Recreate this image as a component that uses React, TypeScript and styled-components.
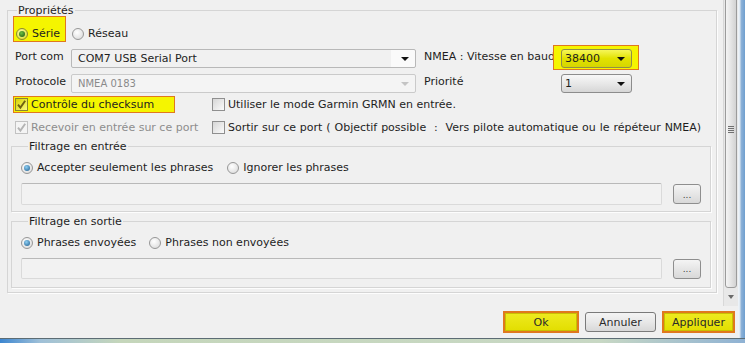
import React from 'react';
import styled, { createGlobalStyle, css } from 'styled-components';

const GlobalStyle = createGlobalStyle`
  html, body {
    margin: 0;
    padding: 0;
    background: #f0f0f0;
  }
  body {
    font-family: "DejaVu Sans", Verdana, sans-serif;
    font-size: 11px;
    line-height: 13px;
    color: #1e1e1e;
  }
`;

type ComboKind = 'flat' | 'disabled' | 'yellow' | 'gray';

function CheckMark({ color }: { color: string }) {
  return (
    <svg width="11" height="11" viewBox="0 0 11 11">
      <path d="M2 5.6 L4.4 8.6 L9.2 1.8" fill="none" stroke={color} strokeWidth="1.9" />
    </svg>
  );
}

function Radio({ checked, hl, children }: { checked?: boolean; hl?: boolean; children: React.ReactNode }) {
  return (
    <S.RadioLabel>
      <S.RadioDot $checked={checked} $hl={hl} />
      {children}
    </S.RadioLabel>
  );
}

function Check({ checked, disabled, hl, children }: { checked?: boolean; disabled?: boolean; hl?: boolean; children: React.ReactNode }) {
  return (
    <S.CheckLabel $disabled={disabled}>
      <S.CheckBox $hl={hl} $disabled={disabled}>
        {checked && <CheckMark color={disabled ? '#b4b4b4' : hl ? '#6e6210' : '#2a3d52'} />}
      </S.CheckBox>
      {children}
    </S.CheckLabel>
  );
}

function Combo({ kind, width, value }: { kind: ComboKind; width: number; value: string }) {
  return (
    <S.Combo $kind={kind} style={{ width }}>
      <S.ComboText $kind={kind}>{value}</S.ComboText>
      <S.ComboArrow $kind={kind} />
    </S.Combo>
  );
}

export default function App() {
  return (
    <>
      <GlobalStyle />
      <S.Window>
        <S.Middle>
          <S.Body>
            <S.TopArea>
              <S.Content>
                <S.Group $outer>
                  <S.Legend $outer>Propriétés</S.Legend>
                  <S.Rows>
                    <S.RadioRow>
                      <S.HlRadio>
                        <Radio checked hl>
                          Série
                        </Radio>
                      </S.HlRadio>
                      <S.Spacer $w={6} />
                      <Radio>Réseau</Radio>
                    </S.RadioRow>

                    <S.FieldRow $top={7}>
                      <S.Label $w={56}>Port com</S.Label>
                      <Combo kind="flat" width={345} value="COM7 USB Serial Port" />
                      <S.Label $w={129} $left={8}>
                        NMEA : Vitesse en baud
                      </S.Label>
                      <S.HlCombo>
                        <Combo kind="yellow" width={71} value="38400" />
                      </S.HlCombo>
                    </S.FieldRow>

                    <S.FieldRow $top={6}>
                      <S.Label $w={56}>Protocole</S.Label>
                      <Combo kind="disabled" width={345} value="NMEA 0183" />
                      <S.Label $w={137} $left={8}>
                        Priorité
                      </S.Label>
                      <Combo kind="gray" width={71} value="1" />
                    </S.FieldRow>

                    <S.CheckRow $top={3} $h={17}>
                      <S.CheckCell>
                        <S.HlCheck>
                          <Check checked hl>
                            Contrôle du checksum
                          </Check>
                        </S.HlCheck>
                      </S.CheckCell>
                      <Check>Utiliser le mode Garmin GRMN en entrée.</Check>
                    </S.CheckRow>

                    <S.CheckRow $top={7} $h={17}>
                      <S.CheckCell>
                        <Check checked disabled>
                          Recevoir en entrée sur ce port
                        </Check>
                      </S.CheckCell>
                      <S.Wide>
                        <Check>
                          Sortir sur ce port ( Objectif possible&nbsp; :&nbsp; Vers pilote automatique ou le répéteur NMEA)
                        </Check>
                      </S.Wide>
                    </S.CheckRow>
                  </S.Rows>

                  <S.Group $top={3} $bottom={6}>
                    <S.Legend>Filtrage en entrée</S.Legend>
                    <S.RadioPair $top={6}>
                      <Radio checked>Accepter seulement les phrases</Radio>
                      <S.Spacer $w={14} />
                      <Radio>Ignorer les phrases</Radio>
                    </S.RadioPair>
                    <S.InputRow $top={7} $h={22}>
                      <S.TextBox />
                      <S.DotsButton>...</S.DotsButton>
                    </S.InputRow>
                  </S.Group>

                  <S.Group $top={3} $bottom={8}>
                    <S.Legend>Filtrage en sortie</S.Legend>
                    <S.RadioPair $top={6}>
                      <Radio checked>Phrases envoyées</Radio>
                      <S.Spacer $w={13} />
                      <Radio>Phrases non envoyées</Radio>
                    </S.RadioPair>
                    <S.InputRow $top={7} $h={21}>
                      <S.TextBox />
                      <S.DotsButton>...</S.DotsButton>
                    </S.InputRow>
                  </S.Group>
                </S.Group>
              </S.Content>

              <S.ScrollBar>
                <S.Thumb>
                  <S.Grip />
                </S.Thumb>
                <S.ScrollArrow>
                  <S.ArrowDown />
                </S.ScrollArrow>
              </S.ScrollBar>
            </S.TopArea>

            <S.ButtonBar>
              <S.Button $hl $w={76}>
                Ok
              </S.Button>
              <S.Button $w={71}>Annuler</S.Button>
              <S.Button $hl $w={73}>
                Appliquer
              </S.Button>
            </S.ButtonBar>
          </S.Body>
          <S.RightFrame />
        </S.Middle>
        <S.BottomFrame />
      </S.Window>
    </>
  );
}

const HL_YELLOW = '#f5f500';
const HL_BORDER = '#e0781e';

const S = {
  Window: styled.div`
    width: 745px;
    height: 343px;
    display: flex;
    flex-direction: column;
    overflow: hidden;
    background: #f0f0f0;
  `,
  Middle: styled.div`
    flex: 1;
    display: flex;
    min-height: 0;
  `,
  Body: styled.div`
    flex: 1;
    display: flex;
    flex-direction: column;
  `,
  TopArea: styled.div`
    height: 306px;
    display: flex;
  `,
  Content: styled.div`
    flex: 1;
    padding: 0 6px 0 7px;
  `,
  Group: styled.fieldset<{ $outer?: boolean; $top?: number; $bottom?: number }>`
    min-width: 0;
    margin: ${(p) => (p.$outer ? 4 : p.$top ?? 0)}px 0 0 0;
    padding: ${(p) => (p.$outer ? '0 5px 4px 3px' : `0 9px ${p.$bottom ?? 6}px 9px`)};
    border: 1px solid #d5d5d5;
    box-shadow: 1px 1px 0 #fdfdfd;
  `,
  Legend: styled.legend<{ $outer?: boolean }>`
    margin-left: ${(p) => (p.$outer ? 6 : 7)}px;
    padding: 0 1px;
    color: #1e1e1e;
  `,
  Rows: styled.div`
    padding-left: 4px;
  `,
  RadioRow: styled.div`
    display: flex;
    align-items: flex-end;
    margin-top: -1px;
    height: 26px;
  `,
  Spacer: styled.span<{ $w: number }>`
    flex: none;
    width: ${(p) => p.$w}px;
  `,
  HlRadio: styled.div`
    box-sizing: border-box;
    width: 53px;
    height: 26px;
    margin-left: -2px;
    padding: 8px 0 0 2px;
    background: ${HL_YELLOW};
    border: 1px solid ${HL_BORDER};
  `,
  RadioLabel: styled.span`
    display: inline-flex;
    align-items: center;
    gap: 4px;
    height: 17px;
    white-space: nowrap;
  `,
  RadioDot: styled.span<{ $checked?: boolean; $hl?: boolean }>`
    position: relative;
    flex: none;
    box-sizing: border-box;
    width: 12px;
    height: 12px;
    border-radius: 50%;
    border: 1px solid ${(p) => (p.$hl ? '#8a8a30' : '#979797')};
    background: ${(p) =>
      p.$hl
        ? 'radial-gradient(circle at 40% 35%, #ffffb0, #d4d41c)'
        : 'radial-gradient(circle at 40% 35%, #ffffff, #d6d6d6)'};
    ${(p) =>
      p.$checked &&
      css`
        &::after {
          content: '';
          position: absolute;
          left: 2px;
          top: 2px;
          width: 6px;
          height: 6px;
          border-radius: 50%;
          background: ${p.$hl
            ? 'radial-gradient(circle at 40% 35%, #6cc040, #1b5410)'
            : 'radial-gradient(circle at 40% 35%, #8fd0f4, #1b5a8c)'};
        }
      `}
  `,
  FieldRow: styled.div<{ $top: number }>`
    display: flex;
    align-items: flex-start;
    height: 19px;
    margin-top: ${(p) => p.$top}px;
  `,
  Label: styled.span<{ $w: number; $left?: number }>`
    flex: none;
    width: ${(p) => p.$w}px;
    margin-left: ${(p) => p.$left ?? 0}px;
    padding-top: 1px;
    white-space: nowrap;
    overflow: hidden;
  `,
  HlCombo: styled.div`
    flex: none;
    margin-top: -4px;
    padding: 3px 6px 1px 7px;
    background: ${HL_YELLOW};
    border: 1px solid ${HL_BORDER};
  `,
  Combo: styled.div<{ $kind: ComboKind }>`
    box-sizing: border-box;
    flex: none;
    height: 19px;
    display: flex;
    align-items: center;
    border-radius: 3px;
    ${(p) =>
      p.$kind === 'flat'
        ? css`
            border: 1px solid #b8b8b8;
            border-radius: 2px;
            background: linear-gradient(90deg, #f1f1f1 0, #f1f1f1 93%, #fafafa 93%);
          `
        : p.$kind === 'disabled'
          ? css`
              border: 1px solid #cacaca;
              border-radius: 2px;
              background: #f4f4f4;
            `
          : p.$kind === 'yellow'
            ? css`
                border: 1px solid #8f8f48;
                background: linear-gradient(#f6f65a, #e2e200 50%, #d6d600);
              `
            : css`
                border: 1px solid #8c8c8c;
                background: linear-gradient(#f7f7f7, #e8e8e8 50%, #d6d6d6);
              `}
  `,
  ComboText: styled.span<{ $kind: ComboKind }>`
    flex: 1;
    padding-left: ${(p) => (p.$kind === 'flat' || p.$kind === 'disabled' ? 6 : 3)}px;
    color: ${(p) => (p.$kind === 'disabled' ? '#8a8a8a' : '#1e1e1e')};
    font-size: ${(p) => (p.$kind === 'disabled' ? 10 : 11)}px;
    white-space: nowrap;
  `,
  ComboArrow: styled.span<{ $kind: ComboKind }>`
    flex: none;
    width: 0;
    height: 0;
    margin-right: 6px;
    border-left: 4px solid transparent;
    border-right: 4px solid transparent;
    border-top: 4px solid ${(p) => (p.$kind === 'disabled' ? '#c4c4c4' : '#101010')};
  `,
  CheckRow: styled.div<{ $top: number; $h: number }>`
    display: flex;
    align-items: center;
    height: ${(p) => p.$h}px;
    margin-top: ${(p) => p.$top}px;
  `,
  CheckCell: styled.div`
    flex: none;
    width: 197px;
  `,
  Wide: styled.div`
    word-spacing: 0.4px;
  `,
  HlCheck: styled.div`
    box-sizing: border-box;
    display: flex;
    align-items: center;
    width: 162px;
    height: 17px;
    margin-left: -2px;
    padding-left: 1px;
    background: ${HL_YELLOW};
    border: 1px solid ${HL_BORDER};
  `,
  CheckLabel: styled.span<{ $disabled?: boolean }>`
    display: inline-flex;
    align-items: center;
    gap: 3px;
    white-space: nowrap;
    color: ${(p) => (p.$disabled ? '#8d8d8d' : '#1e1e1e')};
  `,
  CheckBox: styled.span<{ $hl?: boolean; $disabled?: boolean }>`
    box-sizing: border-box;
    flex: none;
    width: 13px;
    height: 13px;
    display: inline-flex;
    align-items: center;
    justify-content: center;
    border: 1px solid ${(p) => (p.$disabled ? '#c2c2c2' : p.$hl ? '#8a8430' : '#8f8f8f')};
    background: ${(p) =>
      p.$disabled
        ? '#f4f4f4'
        : p.$hl
          ? 'linear-gradient(135deg, #d8d400, #fafa80)'
          : 'linear-gradient(135deg, #d6d6d6, #fbfbfb)'};
  `,
  RadioPair: styled.div<{ $top: number }>`
    display: flex;
    align-items: center;
    height: 17px;
    margin-top: ${(p) => p.$top}px;
  `,
  InputRow: styled.div<{ $top: number; $h: number }>`
    display: flex;
    align-items: center;
    gap: 11px;
    height: ${(p) => p.$h}px;
    margin-top: ${(p) => p.$top}px;
  `,
  TextBox: styled.div`
    box-sizing: border-box;
    flex: 1;
    height: 100%;
    border: 1px solid #dadada;
    border-top-color: #b9b9b9;
    border-radius: 2px;
    background: #f2f2f2;
  `,
  DotsButton: styled.div`
    box-sizing: border-box;
    flex: none;
    width: 28px;
    height: 20px;
    display: flex;
    align-items: center;
    justify-content: center;
    padding-top: 2px;
    border: 1px solid #8e8e8e;
    border-radius: 3px;
    background: linear-gradient(#f4f4f4, #e6e6e6 50%, #d8d8d8);
    font-size: 9px;
    color: #404040;
  `,
  ScrollBar: styled.div`
    flex: none;
    width: 15px;
    box-sizing: border-box;
    display: flex;
    flex-direction: column;
    padding: 0 1px;
    background: #e8e8e8;
    border-left: 1px solid #d8d8d8;
  `,
  Thumb: styled.div`
    flex: 1;
    margin-top: -30px;
    display: flex;
    align-items: center;
    justify-content: center;
    border: 1px solid #9b9b9b;
    border-radius: 3px;
    background: linear-gradient(90deg, #f4f4f4, #e6e6e6 45%, #d2d2d2);
  `,
  Grip: styled.span`
    width: 6px;
    height: 7px;
    background: repeating-linear-gradient(#707070 0 1px, transparent 1px 2px);
  `,
  ScrollArrow: styled.div`
    flex: none;
    height: 18px;
    display: flex;
    align-items: center;
    justify-content: center;
  `,
  ArrowDown: styled.span`
    width: 0;
    height: 0;
    border-left: 3.5px solid transparent;
    border-right: 3.5px solid transparent;
    border-top: 4px solid #6a6a6a;
  `,
  ButtonBar: styled.div`
    flex: 1;
    display: flex;
    align-items: center;
    justify-content: flex-end;
    gap: 6px;
    padding: 0 3px 0 0;
  `,
  Button: styled.div<{ $hl?: boolean; $w: number }>`
    box-sizing: border-box;
    width: ${(p) => p.$w}px;
    display: flex;
    align-items: center;
    justify-content: center;
    color: #2a2a2a;
    ${(p) =>
      p.$hl
        ? css`
            height: 22px;
            border: 2px solid ${HL_BORDER};
            box-shadow: inset 0 0 0 1px #c8c000;
            background: linear-gradient(#eeea20, #e2de00);
          `
        : css`
            height: 20px;
            border: 1px solid #7a7a7a;
            border-radius: 3px;
            background: linear-gradient(#f4f4f4, #e8e8e8 50%, #d8d8d8);
          `}
  `,
  RightFrame: styled.div`
    flex: none;
    width: 7px;
    background: linear-gradient(90deg, #f2f6fa 0, #dbe6f0 2px, #8fb3d8 3px, #6f9fcf 100%);
  `,
  BottomFrame: styled.div`
    flex: none;
    height: 4px;
    border-top: 1px solid #5c6c74;
    background: linear-gradient(90deg, #3c86d0 0, #9fc0d8 40px, #c5d6bb 120px, #c8d8c4 600px, #8fb2d4 100%);
  `,
};
